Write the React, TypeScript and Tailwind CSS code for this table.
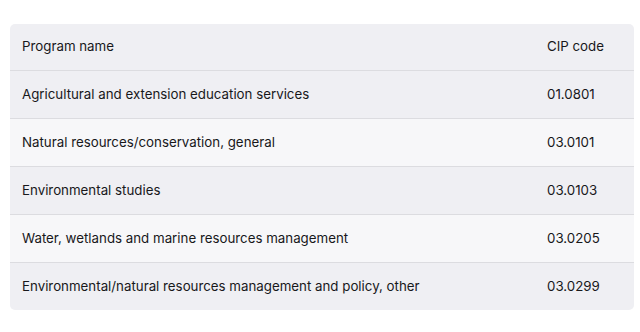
import React from "react";

const rows: [string, string][] = [
  ["Agricultural and extension education services", "01.0801"],
  ["Natural resources/conservation, general", "03.0101"],
  ["Environmental studies", "03.0103"],
  ["Water, wetlands and marine resources management", "03.0205"],
  ["Environmental/natural resources management and policy, other", "03.0299"],
];

export default function App() {
  return (
    <div
      className="w-[640px] h-[332px] bg-white pt-[24px] pl-[10px]"
      style={{ fontFamily: "Inter, 'Noto Sans', sans-serif" }}
    >
      <div className="w-[624px] rounded-[5px] overflow-hidden text-[13.3px] text-[#18181b]">
        <div className="grid grid-cols-[1fr_99px] h-[47px] items-center bg-[#efeff3] border-b border-[#dcdce0]">
          <div className="pl-[12px]">Program name</div>
          <div className="pl-[12px]">CIP code</div>
        </div>
        {rows.map(([name, code], i) => (
          <div
            key={code}
            className={
              "grid grid-cols-[1fr_99px] items-center " +
              (i % 2 === 0 ? "bg-[#efeff3] " : "bg-[#f7f7f9] ") +
              (i < rows.length - 1 ? "h-[48px] border-b border-[#dcdce0]" : "h-[47px]")
            }
          >
            <div className="pl-[12px]">{name}</div>
            <div className="pl-[12px]">{code}</div>
          </div>
        ))}
      </div>
    </div>
  );
}
